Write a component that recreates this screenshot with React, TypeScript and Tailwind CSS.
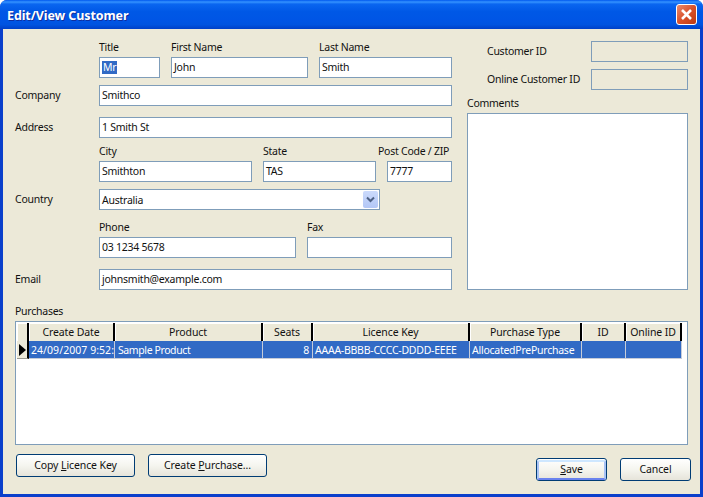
import React from "react";

function Label({ children, className = "" }: { children: React.ReactNode; className?: string }) {
  return <div className={`h-4 leading-[12px] whitespace-nowrap ${className}`}>{children}</div>;
}

function Box({ value, className = "", children, readOnly = false }: { value?: string; className?: string; children?: React.ReactNode; readOnly?: boolean }) {
  return (
    <div className={`h-[21px] border border-[#7F9DB9] ${readOnly ? "bg-[#ECE9D8]" : "bg-white"} pl-[2px] leading-[18px] whitespace-nowrap overflow-hidden ${className}`}>
      {children ?? value}
    </div>
  );
}

function Field({ label, value, className = "", children }: { label: string; value?: string; className?: string; children?: React.ReactNode }) {
  return (
    <div className={`flex flex-col ${className}`}>
      <Label>{label}</Label>
      <Box value={value}>{children}</Box>
    </div>
  );
}

function SideRow({ label, value, className = "" }: { label: string; value: string; className?: string }) {
  return (
    <div className={`flex ${className}`}>
      <div className="w-[84px] pt-[3px] leading-[14px] whitespace-nowrap">{label}</div>
      <Box value={value} className="w-[353px]" />
    </div>
  );
}

function Button({ children, main = false, className = "" }: { children: React.ReactNode; main?: boolean; className?: string }) {
  return (
    <div className={`h-[23px] rounded-[3px] border border-[#003C74] bg-gradient-to-b from-white via-[#F5F5EF] to-[#E6E4DA] tracking-[-0.1px] flex items-center justify-center pt-[1px] ${className}`}>
      {main ? (
        <div className="w-full h-full -mt-[1px] rounded-[2px] border-2 border-t-[#CEE7FF] border-l-[#A9C3F5] border-r-[#A9C3F5] border-b-[#6982EE] flex items-center justify-center pt-[1px]">
          {children}
        </div>
      ) : (
        children
      )}
    </div>
  );
}

const columns = [
  { title: "Create Date", w: "w-[86px]", v: "24/09/2007 9:52:", cls: "pl-[2px] tracking-[0.05px]" },
  { title: "Product", w: "w-[148px]", v: "Sample Product", cls: "pl-[3px] tracking-[-0.4px]" },
  { title: "Seats", w: "w-[50px]", v: "8", cls: "text-right pr-[3px]" },
  { title: "Licence Key", w: "w-[157px]", v: "AAAA-BBBB-CCCC-DDDD-EEEE", cls: "pl-[2px]" },
  { title: "Purchase Type", w: "w-[112px]", v: "AllocatedPrePurchase", cls: "pl-[2px]" },
  { title: "ID", w: "w-[44px]", v: "", cls: "" },
  { title: "Online ID", w: "w-[56px]", v: "", cls: "" },
];

export default function App() {
  return (
    <div
      className="w-[703px] h-[497px] bg-[#0A3FCB] rounded-t-[7px] flex flex-col overflow-hidden text-[10.5px] tracking-[-0.25px] text-[#111]"
      style={{ fontFamily: '"Noto Sans", "Liberation Sans", Arial, sans-serif' }}
    >
      {/* Title bar */}
      <div className="h-[29px] shrink-0 flex items-center justify-between pl-[7px] pr-[6px] bg-[linear-gradient(180deg,#0058EE_0%,#3593FF_7%,#0A66F0_14%,#0058E6_40%,#0055E5_70%,#0054E0_85%,#0040C8_100%)]">
        <div className="text-white font-bold text-[12.5px] tracking-[-0.1px] leading-none pt-[3px] [text-shadow:1px_1px_0_#0F2F9F]">Edit/View Customer</div>
        <div className="w-[21px] h-[21px] rounded-[3px] border border-white bg-gradient-to-br from-[#E98A6C] via-[#D9512A] to-[#BC3A12] flex items-center justify-center">
          <svg width="13" height="13" viewBox="0 0 13 13">
            <path d="M2 2 L11 11 M11 2 L2 11" stroke="white" strokeWidth="2.6" />
          </svg>
        </div>
      </div>

      {/* Client area */}
      <div className="mx-[3px] mb-[3px] flex-1 bg-[#ECE9D8] flex flex-col pl-[12px] pr-[12px]">
        <div className="flex pt-[12px]">
          {/* Left form */}
          <div className="w-[437px] flex flex-col">
            <div className="flex pl-[84px] gap-[11px]">
              <Field label="Title" className="w-[61px]">
                <span className="bg-[#316AC5] text-white inline-block h-[13px] leading-[13px] px-[1px] mt-[3px] align-top">Mr</span>
              </Field>
              <Field label="First Name" value="John" className="w-[137px]" />
              <Field label="Last Name" value="Smith" className="w-[133px]" />
            </div>
            <SideRow label="Company" value="Smithco" className="mt-[7px]" />
            <SideRow label="Address" value="1 Smith St" className="mt-[11px]" />
            <div className="flex pl-[84px] gap-[11px] mt-[7px]">
              <Field label="City" value="Smithton" className="w-[153px]" />
              <Field label="State" value="TAS" className="w-[113px]" />
              <div className="flex flex-col w-[65px]">
                <Label className="-ml-[9px]">Post Code / ZIP</Label>
                <Box value="7777" />
              </div>
            </div>
            <div className="flex mt-[7px]">
              <div className="w-[84px] pt-[3px] leading-[14px]">Country</div>
              <div className="w-[281px] h-[21px] border border-[#7F9DB9] bg-white pl-[2px] pr-[1px] flex items-center justify-between">
                <span className="pt-[2px]">Australia</span>
                <div className="w-[15px] h-[17px] rounded-[2px] bg-gradient-to-b from-[#CBDAFC] to-[#B3C7F6] flex items-center justify-center">
                  <svg width="9" height="7" viewBox="0 0 9 7">
                    <path d="M1 1.5 L4.5 5 L8 1.5" fill="none" stroke="#4D6185" strokeWidth="2" />
                  </svg>
                </div>
              </div>
            </div>
            <div className="flex pl-[84px] gap-[11px] mt-[11px]">
              <Field label="Phone" value="03 1234 5678" className="w-[197px]" />
              <Field label="Fax" className="w-[145px]" />
            </div>
            <SideRow label="Email" value="johnsmith@example.com" className="mt-[11px]" />
          </div>

          {/* Right column */}
          <div className="ml-[15px] w-[221px] flex flex-col">
            <div className="flex">
              <div className="w-[124px] pl-[20px] pt-[3px] leading-[14px] whitespace-nowrap">Customer ID</div>
              <Box readOnly className="w-[97px]" />
            </div>
            <div className="flex mt-[7px]">
              <div className="w-[124px] pl-[20px] pt-[3px] leading-[14px] whitespace-nowrap">Online Customer ID</div>
              <Box readOnly className="w-[97px]" />
            </div>
            <Label className="mt-[7px] h-[16px]">Comments</Label>
            <div className="h-[177px] border border-[#7F9DB9] bg-white" />
          </div>
        </div>

        {/* Purchases */}
        <Label className="mt-[15px]">Purchases</Label>
        <div className="h-[124px] border border-[#7F9DB9] bg-white pl-[1px] pt-[1px]">
          <div className="flex h-[18px] text-center tracking-[-0.1px]">
            <div className="w-[12px] border-r-2 border-black bg-[#ECE9D8] shadow-[inset_1px_1px_0_#fff]" />
            {columns.map((c) => (
              <div key={c.title} className={`${c.w} border-r-2 border-black bg-[#ECE9D8] leading-[19px] whitespace-nowrap overflow-hidden shadow-[inset_1px_1px_0_#fff]`}>
                {c.title}
              </div>
            ))}
          </div>
          <div className="flex h-[18px]">
            <div className="w-[12px] border-r-2 border-b border-black border-b-[#9A9A90] bg-[#ECE9D8] flex items-center justify-center">
              <svg width="7" height="12" viewBox="0 0 7 12">
                <path d="M0 0 L7 6 L0 12 Z" fill="#000" />
              </svg>
            </div>
            {columns.map((c) => (
              <div key={c.title} className={`${c.w} ${c.cls} bg-[#316AC5] text-white border-r border-b border-[#C6CCD8] leading-[19px] whitespace-nowrap overflow-hidden`}>
                {c.v}
              </div>
            ))}
          </div>
        </div>

        {/* Buttons */}
        <div className="flex items-start mt-[9px]">
          <Button className="w-[119px] ml-[1px]">
            <span>Copy <span className="underline">L</span>icence Key</span>
          </Button>
          <Button className="w-[119px] ml-[13px]">
            <span>Create <span className="underline">P</span>urchase...</span>
          </Button>
          <Button main className="w-[71px] ml-auto mt-[4px]">
            <span><span className="underline">S</span>ave</span>
          </Button>
          <Button className="w-[71px] ml-[13px] -mr-[3px] mt-[4px]">Cancel</Button>
        </div>
      </div>
    </div>
  );
}
